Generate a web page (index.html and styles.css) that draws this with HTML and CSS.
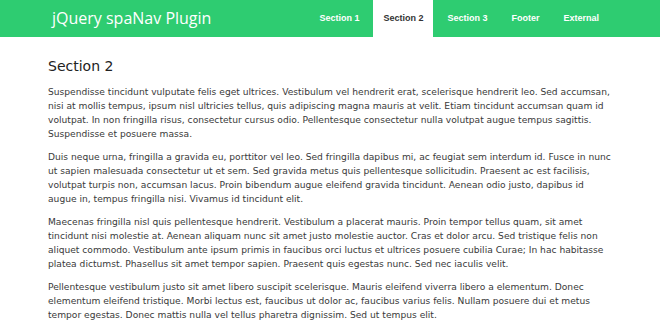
FILE: index.html
```html
<!DOCTYPE html>
<html>
<head>
<meta charset="utf-8">
<title>jQuery spaNav Plugin</title>
<link rel="stylesheet" href="styles.css">
</head>
<body>
<header class="topbar">
  <div class="wrap bar-inner">
    <div class="brand">jQuery spaNav Plugin</div>
    <nav class="nav">
      <a class="nav-item" href="#s1">Section 1</a>
      <a class="nav-item active" href="#s2">Section 2</a>
      <a class="nav-item" href="#s3">Section 3</a>
      <a class="nav-item" href="#footer">Footer</a>
      <a class="nav-item" href="#ext">External</a>
    </nav>
  </div>
</header>
<main class="wrap content">
  <h2 class="title">Section 2</h2>
  <p>Suspendisse tincidunt vulputate felis eget ultrices. Vestibulum vel hendrerit erat, scelerisque hendrerit leo. Sed accumsan, nisi at mollis tempus, ipsum nisl ultricies tellus, quis adipiscing magna mauris at velit. Etiam tincidunt accumsan quam id volutpat. In non fringilla risus, consectetur cursus odio. Pellentesque consectetur nulla volutpat augue tempus sagittis. Suspendisse et posuere massa.</p>
  <p>Duis neque urna, fringilla a gravida eu, porttitor vel leo. Sed fringilla dapibus mi, ac feugiat sem interdum id. Fusce in nunc ut sapien malesuada consectetur ut et sem. Sed gravida metus quis pellentesque sollicitudin. Praesent ac est facilisis, volutpat turpis non, accumsan lacus. Proin bibendum augue eleifend gravida tincidunt. Aenean odio justo, dapibus id augue in, tempus fringilla nisi. Vivamus id tincidunt elit.</p>
  <p>Maecenas fringilla nisl quis pellentesque hendrerit. Vestibulum a placerat mauris. Proin tempor tellus quam, sit amet tincidunt nisi molestie at. Aenean aliquam nunc sit amet justo molestie auctor. Cras et dolor arcu. Sed tristique felis non aliquet commodo. Vestibulum ante ipsum primis in faucibus orci luctus et ultrices posuere cubilia Curae; In hac habitasse platea dictumst. Phasellus sit amet tempor sapien. Praesent quis egestas nunc. Sed nec iaculis velit.</p>
  <p>Pellentesque vestibulum justo sit amet libero suscipit scelerisque. Mauris eleifend viverra libero a elementum. Donec elementum eleifend tristique. Morbi lectus est, faucibus ut dolor ac, faucibus varius felis. Nullam posuere dui et metus tempor egestas. Donec mattis nulla vel tellus pharetra dignissim. Sed ut tempus elit.</p>
</main>
</body>
</html>
```

FILE: styles.css
```css
html, body {
  margin: 0;
  padding: 0;
  background: #ffffff;
}
body {
  font-family: "DejaVu Sans", Verdana, sans-serif;
  color: #3a3a3a;
}
.wrap {
  width: 564px;
  margin: 0 auto;
}
.topbar {
  background: #2ecc71;
  height: 37px;
}
.bar-inner {
  display: flex;
  justify-content: space-between;
  height: 37px;
}
.brand {
  font-family: "Open Sans", sans-serif;
  font-size: 16px;
  color: #ffffff;
  line-height: 36px;
  padding-left: 4px;
}
.nav {
  display: flex;
  gap: 4px;
  margin-right: 3px;
}
.nav-item {
  font-family: "Liberation Sans", Arial, sans-serif;
  font-weight: bold;
  font-size: 9px;
  color: #ffffff;
  text-decoration: none;
  padding: 0 10px;
  line-height: 37px;
}
.nav-item.active {
  background: #ffffff;
  color: #333333;
}
.content {
  padding-top: 21px;
}
.title {
  font-family: "DejaVu Sans", Verdana, sans-serif;
  font-weight: normal;
  font-size: 14px;
  color: #222222;
  margin: 0 0 11px 0;
}
.content p {
  font-size: 9.15px;
  line-height: 14px;
  margin: 0 0 9px 0;
}
```
